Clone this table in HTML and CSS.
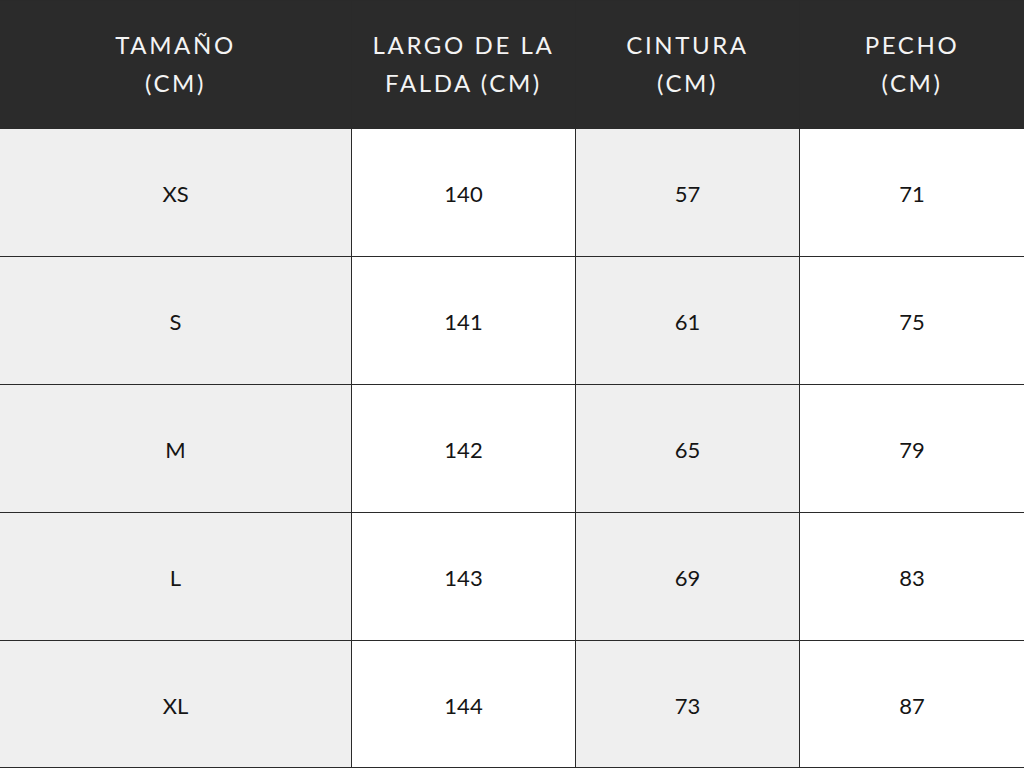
FILE: index.html
```html
<!DOCTYPE html>
<html lang="es">
<head>
<meta charset="utf-8">
<title>Tabla de tallas</title>
<link rel="stylesheet" href="styles.css">
</head>
<body>
<div class="chart">
  <div class="cell head">TAMAÑO<br>(CM)</div>
  <div class="cell head">LARGO DE LA<br>FALDA (CM)</div>
  <div class="cell head">CINTURA<br>(CM)</div>
  <div class="cell head">PECHO<br>(CM)</div>

  <div class="cell shade">XS</div>
  <div class="cell">140</div>
  <div class="cell shade">57</div>
  <div class="cell">71</div>

  <div class="cell shade">S</div>
  <div class="cell">141</div>
  <div class="cell shade">61</div>
  <div class="cell">75</div>

  <div class="cell shade">M</div>
  <div class="cell">142</div>
  <div class="cell shade">65</div>
  <div class="cell">79</div>

  <div class="cell shade">L</div>
  <div class="cell">143</div>
  <div class="cell shade">69</div>
  <div class="cell">83</div>

  <div class="cell shade">XL</div>
  <div class="cell">144</div>
  <div class="cell shade">73</div>
  <div class="cell">87</div>
</div>
</body>
</html>
```
FILE: styles.css
```css
html, body {
  margin: 0;
  padding: 0;
}
body {
  width: 1024px;
  height: 768px;
  overflow: hidden;
  font-family: "Lato", "Open Sans", sans-serif;
}
.chart {
  display: grid;
  grid-template-columns: 351px 223px 223px 224px;
  grid-template-rows: 127px 127px 127px 127px 127px 126px;
  gap: 1px;
  padding: 1px 0;
  background: #2a2a2a;
  width: 1024px;
  height: 768px;
  box-sizing: border-box;
}
.cell {
  display: flex;
  align-items: center;
  justify-content: center;
  text-align: center;
  background: #ffffff;
  color: #151515;
  font-size: 22px;
  padding-top: 2px;
}
.cell.shade {
  background: #efefef;
}
.cell.head {
  background: #2b2b2b;
  color: #f4f4f4;
  font-size: 24px;
  letter-spacing: 2.6px;
  line-height: 38px;
  padding-top: 0;
  padding-bottom: 2px;
}
```
